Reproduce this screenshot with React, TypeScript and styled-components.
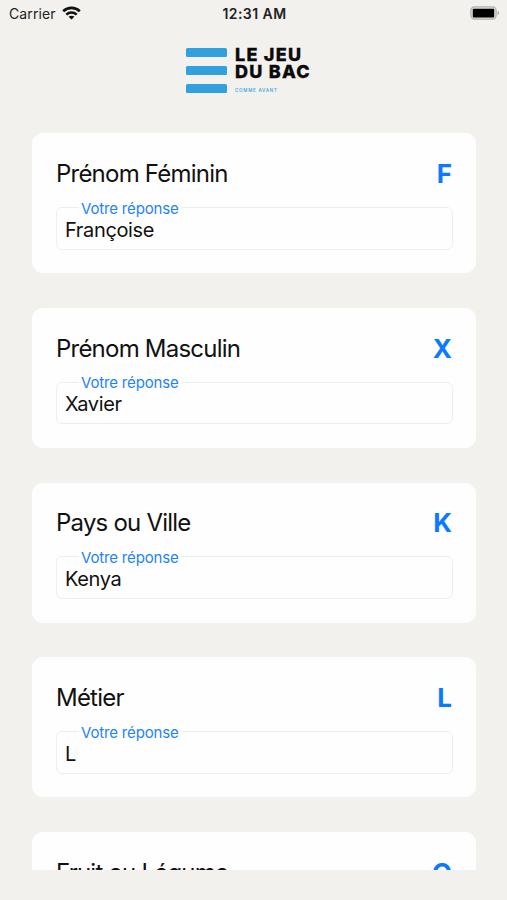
import React from 'react';
import styled, { createGlobalStyle } from 'styled-components';

type AnswerType = {
    title: string;
    letter: string;
    value: string;
}

const answers: AnswerType[] = [
    { title: 'Prénom Féminin', letter: 'F', value: 'Françoise' },
    { title: 'Prénom Masculin', letter: 'X', value: 'Xavier' },
    { title: 'Pays ou Ville', letter: 'K', value: 'Kenya' },
    { title: 'Métier', letter: 'L', value: 'L' },
    { title: 'Fruit ou Légume', letter: 'O', value: '' },
];

const GlobalStyle = createGlobalStyle`
  * {
    box-sizing: border-box;
  }
  body {
    margin: 0;
    background: #f2f1ee;
    font-family: Inter, "Liberation Sans", sans-serif;
  }
`;

const Screen = styled.div`
  width: 507px;
  height: 900px;
  display: flex;
  flex-direction: column;
  overflow: hidden;
  background: #f2f1ee;
`;

const StatusBar = styled.div`
  height: 28px;
  flex: none;
  display: grid;
  grid-template-columns: 1fr auto 1fr;
  align-items: center;
  padding: 0 7px 2px 9px;
  color: #222;
`;

const Carrier = styled.div`
  display: flex;
  align-items: center;
  gap: 6px;
  font-size: 14px;
  letter-spacing: 0.1px;
`;

const Clock = styled.div`
  font-size: 14px;
  font-weight: 600;
  letter-spacing: 0.45px;
`;

const BatterySlot = styled.div`
  display: flex;
  justify-content: flex-end;
`;

const Header = styled.header`
  height: 105px;
  flex: none;
  display: flex;
  align-items: flex-start;
  gap: 8px;
  padding: 18px 0 0 186px;
`;

const Bars = styled.div`
  width: 41px;
  display: flex;
  flex-direction: column;
  gap: 9px;
  padding-top: 2px;
`;

const Bar = styled.span`
  height: 9px;
  border-radius: 1.5px;
  background: #32a0df;
`;

const Brand = styled.div`
  display: flex;
  flex-direction: column;
`;

const BrandLine = styled.span`
  font-size: 18px;
  font-weight: 800;
  line-height: 17px;
  letter-spacing: 1.25px;
  -webkit-text-stroke: 0.3px #0a0a0a;
  white-space: nowrap;
  color: #0a0a0a;
`;

const Tagline = styled.span`
  margin-top: 7px;
  font-size: 4.5px;
  font-weight: 600;
  line-height: 8px;
  letter-spacing: 0.75px;
  white-space: nowrap;
  color: #4aa9dc;
`;

const List = styled.main`
  height: 737px;
  flex: none;
  display: flex;
  flex-direction: column;
  gap: 34.7px;
  padding: 0.4px 31px 0 32px;
  overflow: hidden;
`;

const Card = styled.section`
  height: 140px;
  flex: none;
  padding: 23px 24px 0;
  border-radius: 11px;
  background: #fefefe;
`;

const CardHead = styled.div`
  height: 34px;
  display: flex;
  align-items: center;
  justify-content: space-between;
`;

const Title = styled.h2`
  margin: 0;
  font-size: 24px;
  font-weight: 400;
  letter-spacing: -0.78px;
  color: #111;
`;

const Letter = styled.span`
  font-size: 26px;
  font-weight: 700;
  color: #0a7aff;
`;

const Field = styled.fieldset`
  width: 397px;
  height: 51px;
  min-width: 0;
  margin: 8.2px 0 0;
  padding: 0 8px;
  border: 1px solid #eeeeee;
  border-radius: 6px;
`;

const Legend = styled.legend`
  height: 18px;
  margin-left: 14px;
  padding: 0 2px;
  font-size: 15px;
  line-height: 20px;
  letter-spacing: -0.17px;
  color: #1e83fa;
`;

const Value = styled.div`
  font-size: 20px;
  line-height: 26px;
  letter-spacing: -0.35px;
  color: #111;
`;

const WifiIcon = () => (
    <svg width="19" height="14" viewBox="0 0 19 14" fill="none" stroke="#111" strokeWidth="2.6">
        <path d="M1.2 5.2C6 .7 13 .7 17.8 5.2" />
        <path d="M4.3 8.6C7.3 5.8 11.7 5.8 14.7 8.6" />
        <path d="M9.5 13.6L6.6 10.8C8.2 9.3 10.8 9.3 12.4 10.8Z" fill="#111" stroke="none" />
    </svg>
);

const BatteryIcon = () => (
    <svg width="30" height="14" viewBox="0 0 30 14">
        <rect x="0.9" y="0.9" width="25.2" height="12.2" rx="3.5" fill="#ddd" stroke="#b3b3b1" strokeWidth="1.3" />
        <rect x="2.8" y="2.8" width="21.4" height="8.6" rx="1" fill="#000" />
        <path d="M27.6 4.8C29.6 5.6 29.6 8.4 27.6 9.2Z" fill="#a5a5a3" />
    </svg>
);

const App = () => {
    return (
        <Screen>
            <GlobalStyle />
            <StatusBar>
                <Carrier>
                    Carrier
                    <WifiIcon />
                </Carrier>
                <Clock>12:31 AM</Clock>
                <BatterySlot>
                    <BatteryIcon />
                </BatterySlot>
            </StatusBar>
            <Header>
                <Bars>
                    <Bar />
                    <Bar />
                    <Bar />
                </Bars>
                <Brand>
                    <BrandLine>LE JEU</BrandLine>
                    <BrandLine>DU BAC</BrandLine>
                    <Tagline>COMME AVANT</Tagline>
                </Brand>
            </Header>
            <List>
                {answers.map(answer => (
                    <Card key={answer.title}>
                        <CardHead>
                            <Title>{answer.title}</Title>
                            <Letter>{answer.letter}</Letter>
                        </CardHead>
                        <Field>
                            <Legend>Votre réponse</Legend>
                            <Value>{answer.value}</Value>
                        </Field>
                    </Card>
                ))}
            </List>
        </Screen>
    );
}

export default App
